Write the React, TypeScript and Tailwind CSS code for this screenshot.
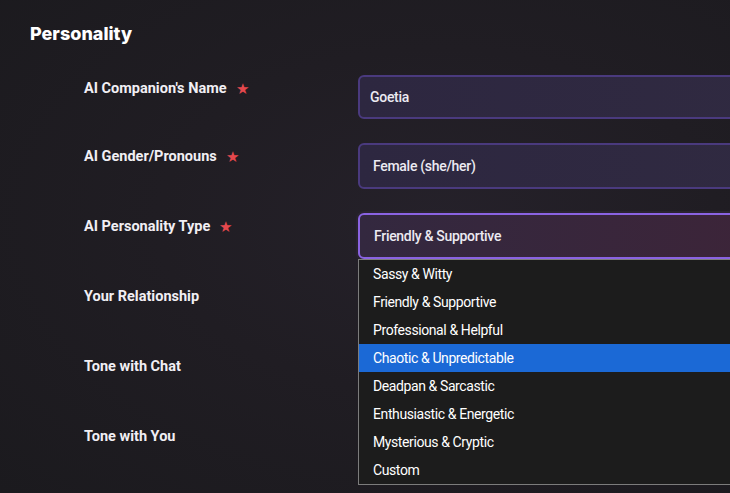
import React from 'react'

const fields = [
  { label: "AI Companion's Name", required: true },
  { label: 'AI Gender/Pronouns', required: true },
  { label: 'AI Personality Type', required: true },
  { label: 'Your Relationship', required: false },
  { label: 'Tone with Chat', required: false },
  { label: 'Tone with You', required: false },
]

const options = [
  'Sassy & Witty',
  'Friendly & Supportive',
  'Professional & Helpful',
  'Chaotic & Unpredictable',
  'Deadpan & Sarcastic',
  'Enthusiastic & Energetic',
  'Mysterious & Cryptic',
  'Custom',
]

function Label({ label, required }: { label: string; required: boolean }) {
  return (
    <div className="w-[358px] shrink-0 pl-[84px] pt-[4px] flex items-center">
      <span className="text-[14.5px] font-bold text-[#f1eff4] leading-[20px]">{label}</span>
      {required && <span className="ml-[9px] text-[15px] text-[#e5484d] leading-[20px]">★</span>}
    </div>
  )
}

export default function App() {
  return (
    <main
      className="relative w-[730px] h-[493px] overflow-hidden bg-[#1e1c20] bg-[radial-gradient(ellipse_at_60%_45%,#25212a_0%,#201d23_45%,#1b1a1e_100%)]"
      style={{ fontFamily: 'Roboto, "Noto Sans", sans-serif' }}
    >
      <h2
        className="pl-[30px] pt-[22px] text-[18px] font-extrabold text-white leading-[24px]"
        style={{ fontFamily: 'Inter, "Noto Sans", sans-serif' }}
      >
        Personality
      </h2>

      <div className="mt-[29px] flex flex-col">
        {/* name */}
        <div className="flex items-start">
          <Label {...fields[0]} />
          <div className="w-[440px] shrink-0 h-[44px] rounded-[6px] border-2 border-[#4a3a7e] bg-gradient-to-r from-[#2d2740] to-[#302a41] pl-[10px] flex items-center text-[14px] font-medium text-[#eceaf2] tracking-[-0.3px]">
            Goetia
          </div>
        </div>

        {/* gender */}
        <div className="mt-[24px] flex items-start">
          <Label {...fields[1]} />
          <div className="w-[440px] shrink-0 h-[46px] rounded-[6px] border-2 border-[#4a3a7e] bg-gradient-to-r from-[#2d2740] to-[#302a41] pl-[13px] pt-[1px] flex items-center text-[14px] font-medium text-[#eceaf2] tracking-[-0.3px]">
            Female (she/her)
          </div>
        </div>

        {/* personality type, open */}
        <div className="mt-[24px] flex items-start">
          <Label {...fields[2]} />
          <div className="relative shrink-0">
            <div className="w-[440px] h-[46px] rounded-[6px] border-2 border-[#8a63e2] bg-gradient-to-r from-[#33283f] to-[#3d2438] pl-[14px] pt-[1px] flex items-center text-[14px] font-medium text-[#eceaf2] tracking-[-0.3px] shadow-[0_0_0_2px_#2a2430]">
              Friendly &amp; Supportive
            </div>
            <ul className="absolute left-0 top-[46px] z-10 w-[440px] border border-[#7c7c7c] bg-[#1c1c1c]">
              {options.map((o) => (
                <li
                  key={o}
                  className={`h-[28px] pl-[14px] pt-[1px] flex items-center text-[14px] text-white tracking-[-0.4px] ${
                    o === 'Chaotic & Unpredictable' ? 'bg-[#1b69d6]' : ''
                  }`}
                >
                  {o}
                </li>
              ))}
            </ul>
          </div>
        </div>

        {fields.slice(3).map((f) => (
          <div key={f.label} className="mt-[24px] flex items-start">
            <Label {...f} />
            <div className="w-[440px] shrink-0 h-[46px] rounded-[6px] border-2 border-[#4a3a7e] bg-[#2d2740]" />
          </div>
        ))}
      </div>
    </main>
  )
}
